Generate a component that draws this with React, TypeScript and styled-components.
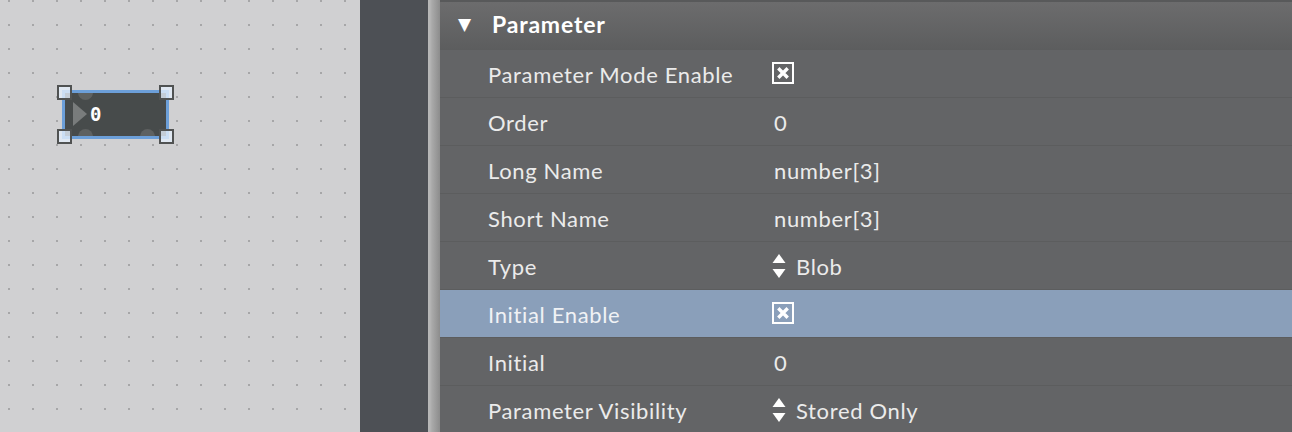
import React from 'react';
import styled, { createGlobalStyle } from 'styled-components';

type Row = {
  label: string;
  value?: string;
  kind: 'text' | 'check' | 'enum';
  selected?: boolean;
};

const rows: Row[] = [
  { label: 'Parameter Mode Enable', kind: 'check' },
  { label: 'Order', value: '0', kind: 'text' },
  { label: 'Long Name', value: 'number[3]', kind: 'text' },
  { label: 'Short Name', value: 'number[3]', kind: 'text' },
  { label: 'Type', value: 'Blob', kind: 'enum' },
  { label: 'Initial Enable', kind: 'check', selected: true },
  { label: 'Initial', value: '0', kind: 'text' },
  { label: 'Parameter Visibility', value: 'Stored Only', kind: 'enum' },
];

export default function App() {
  return (
    <>
      <GlobalStyle />
      <Layout>
        <Canvas>
          <NumberBox>
            <BoxInner>
              <Inlet $left={13} $top />
              <Inlet $left={13} />
              <Inlet $left={75} />
              <Arrow />
              <NumberText>0</NumberText>
            </BoxInner>
            <Handle $x="left" $y="top" />
            <Handle $x="right" $y="top" />
            <Handle $x="left" $y="bottom" />
            <Handle $x="right" $y="bottom" />
          </NumberBox>
        </Canvas>
        <Gutter />
        <Splitter />
        <Inspector>
          <SectionHeader>
            <Disclosure>▼</Disclosure>
            <SectionTitle>Parameter</SectionTitle>
          </SectionHeader>
          {rows.map((r, i) => (
            <PropRow key={i} $selected={r.selected}>
              <PropLabel>{r.label}</PropLabel>
              <PropValue>
                {r.kind === 'check' && (
                  <CheckBox>
                    <svg width="12" height="12" viewBox="0 0 12 12">
                      <path d="M2.5 2.5 L9.5 9.5 M9.5 2.5 L2.5 9.5" stroke="#fff" strokeWidth="3.4" strokeLinecap="square" />
                    </svg>
                  </CheckBox>
                )}
                {r.kind === 'enum' && (
                  <>
                    <Stepper>
                      <svg width="14" height="28" viewBox="0 0 14 28">
                        <path d="M7 2 L13.5 11 L0.5 11 Z" fill="#fff" />
                        <path d="M0.5 17 L13.5 17 L7 26 Z" fill="#fff" />
                      </svg>
                    </Stepper>
                    <span>{r.value}</span>
                  </>
                )}
                {r.kind === 'text' && <span>{r.value}</span>}
              </PropValue>
            </PropRow>
          ))}
        </Inspector>
      </Layout>
    </>
  );
}

const GlobalStyle = createGlobalStyle`
  html, body {
    margin: 0;
    padding: 0;
    overflow: hidden;
  }
  body {
    font-family: Lato, "Open Sans", sans-serif;
  }
`;

const Layout = styled.div`
  display: flex;
  width: 1292px;
  height: 432px;
  overflow: hidden;
`;

const Canvas = styled.div`
  position: relative;
  width: 360px;
  flex-shrink: 0;
  background-color: #d0d0d2;
  background-image: radial-gradient(circle, #a6a6a8 1px, transparent 1.3px);
  background-size: 24px 24px;
  background-position: -3px -11px;
`;

const NumberBox = styled.div`
  position: absolute;
  left: 62px;
  top: 90px;
  width: 101px;
  height: 43px;
  border: 3px solid #6c9fd9;
`;

const BoxInner = styled.div`
  position: relative;
  width: 100%;
  height: 100%;
  overflow: hidden;
  background: #474b4b;
`;

const Inlet = styled.div<{ $left: number; $top?: boolean }>`
  position: absolute;
  left: ${(p) => p.$left}px;
  ${(p) => (p.$top ? 'top: -8px;' : 'bottom: -8px;')}
  width: 15px;
  height: 15px;
  border-radius: 50%;
  background: #5e6161;
`;

const Arrow = styled.div`
  position: absolute;
  left: 8px;
  top: 9px;
  width: 0;
  height: 0;
  border-top: 12px solid transparent;
  border-bottom: 12px solid transparent;
  border-left: 14px solid #797c7c;
`;

const NumberText = styled.div`
  position: absolute;
  left: 25px;
  top: 10px;
  font-family: "DejaVu Sans Mono", monospace;
  font-weight: bold;
  font-size: 19px;
  line-height: 22px;
  color: #ffffff;
`;

const Handle = styled.div<{ $x: 'left' | 'right'; $y: 'top' | 'bottom' }>`
  position: absolute;
  ${(p) => p.$x}: -8px;
  ${(p) => p.$y}: -8px;
  width: 11px;
  height: 11px;
  border: 2px solid #505252;
  background: rgba(228, 238, 250, 0.8);
`;

const Gutter = styled.div`
  width: 68px;
  flex-shrink: 0;
  background: #4d5055;
`;

const Splitter = styled.div`
  width: 12px;
  flex-shrink: 0;
  background: linear-gradient(to right, #b9b9b9 0px, #b5b5b5 2px, #a9a9a9 4px, #8c8c8c 12px);
`;

const Inspector = styled.div`
  flex: 1;
  display: flex;
  flex-direction: column;
  background: #636466;
`;

const SectionHeader = styled.div`
  height: 48px;
  flex-shrink: 0;
  display: flex;
  align-items: center;
  border-top: 2px solid #58595a;
  background: linear-gradient(to bottom, #6c6c6d, #5c5d5e);
  color: #ffffff;
`;

const Disclosure = styled.span`
  width: 18px;
  margin-left: 18px;
  margin-right: 16px;
  margin-top: -3px;
  font-size: 17px;
  line-height: 1;
  font-family: "DejaVu Sans", sans-serif;
`;

const SectionTitle = styled.span`
  font-size: 23px;
  font-weight: bold;
  letter-spacing: 0.8px;
  margin-top: -4px;
`;

const PropRow = styled.div<{ $selected?: boolean }>`
  height: 46px;
  padding-top: 1px;
  flex-shrink: 0;
  display: flex;
  align-items: center;
  border-bottom: 1px solid #5c5d5e;
  background: ${(p) => (p.$selected ? '#8a9fba' : '#636466')};
  color: ${(p) => (p.$selected ? '#f0f2f5' : '#ebebeb')};
  font-size: 22px;
  letter-spacing: 0.65px;
`;

const PropLabel = styled.div`
  width: 286px;
  padding-left: 48px;
  flex-shrink: 0;
`;

const PropValue = styled.div`
  display: flex;
  align-items: center;
  gap: 10px;
`;

const CheckBox = styled.div`
  width: 22px;
  height: 22px;
  box-sizing: border-box;
  border: 2px solid #ffffff;
  display: flex;
  align-items: center;
  justify-content: center;
  margin-top: -2px;
  margin-left: -2px;
`;

const Stepper = styled.span`
  display: flex;
  align-items: center;
  margin-left: -2px;
`;
